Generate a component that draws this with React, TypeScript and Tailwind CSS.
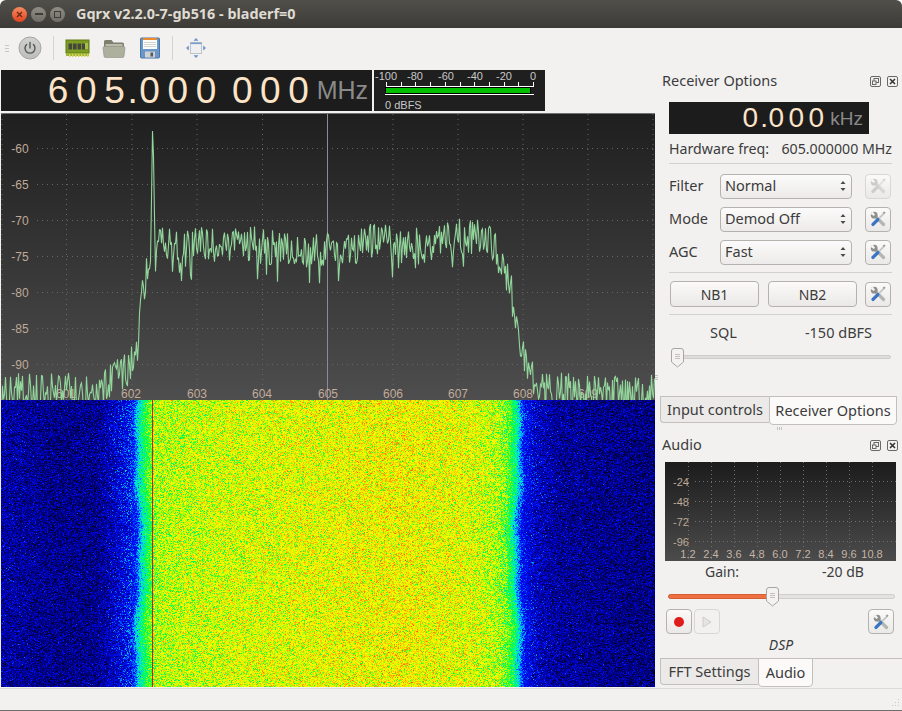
import { useEffect, useRef, type ReactNode } from 'react'

const UI = 'font-["Noto_Sans",sans-serif]'
const ARIAL = 'font-["Liberation_Sans",Arial,sans-serif]'

function rng(seed: number) {
  let a = seed
  return () => {
    a = (a + 0x6d2b79f5) | 0
    let t = Math.imul(a ^ (a >>> 15), 1 | a)
    t = (t + Math.imul(t ^ (t >>> 7), 61 | t)) ^ t
    return ((t ^ (t >>> 14)) >>> 0) / 4294967296
  }
}

function lerpTable(table: number[][], x: number) {
  if (x <= table[0][0]) return table[0][1]
  for (let i = 1; i < table.length; i++) {
    if (x <= table[i][0]) {
      const [x0, y0] = table[i - 1]
      const [x1, y1] = table[i]
      return y0 + ((y1 - y0) * (x - x0)) / (x1 - x0)
    }
  }
  return table[table.length - 1][1]
}

// spectrum envelope, x in plot pixels -> dB
const ENVELOPE = [
  [0, -93.8], [100, -93.5], [118, -91.5], [133, -89.5], [136, -87], [140, -81], [146, -76], [155, -73.5],
  [250, -73.3], [300, -73.8], [330, -74.3], [370, -72.7], [420, -73.5], [440, -73], [465, -72],
  [490, -72.8], [497, -75], [510, -80], [518, -87], [528, -91], [545, -93.5], [654, -93.8],
]

const SPIKE: Record<number, number> = { 149: -75.6, 150: -67, 151: -57.5, 152: -61, 153: -69.3, 154: -77 }

function tracePoints() {
  const rand = rng(605)
  const pts: string[] = []
  for (let x = 0; x < 654; x++) {
    const db = SPIKE[x] ?? lerpTable(ENVELOPE, x) + (rand() - 0.5) * 5.2 + (rand() < 0.08 ? -2.5 : 0)
    pts.push(`${x + 0.5},${(35 + (-60 - db) * 7.2).toFixed(1)}`)
  }
  return pts.join(' ')
}

const COLORMAP = [
  [0, 0, 0, 0], [0.12, 0, 0, 70], [0.24, 0, 0, 190], [0.34, 0, 20, 255], [0.42, 0, 170, 255], [0.48, 0, 240, 200],
  [0.56, 0, 255, 60], [0.66, 200, 255, 0], [0.72, 255, 255, 0], [0.84, 255, 150, 0], [1, 255, 0, 0],
]

function colorAt(v: number) {
  const c = Math.max(0, Math.min(1, v))
  for (let i = 1; i < COLORMAP.length; i++) {
    if (c <= COLORMAP[i][0]) {
      const a = COLORMAP[i - 1]
      const b = COLORMAP[i]
      const t = (c - a[0]) / (b[0] - a[0])
      return [a[1] + (b[1] - a[1]) * t, a[2] + (b[2] - a[2]) * t, a[3] + (b[3] - a[3]) * t]
    }
  }
  return [255, 0, 0]
}

const LEVELS = [
  [0, 0.22], [50, 0.185], [95, 0.19], [115, 0.26], [133, 0.34], [138, 0.46], [146, 0.57], [156, 0.66],
  [230, 0.69], [330, 0.71], [400, 0.725], [470, 0.7], [495, 0.66], [506, 0.6], [513, 0.52], [517, 0.42],
  [522, 0.32], [535, 0.25], [560, 0.2], [654, 0.175],
]

function Waterfall() {
  const ref = useRef<HTMLCanvasElement>(null)
  useEffect(() => {
    const ctx = ref.current?.getContext('2d')
    if (!ctx) return
    const rand = rng(42)
    const img = ctx.createImageData(654, 287)
    for (let y = 0; y < 287; y++) {
      const wobble = Math.sin(y / 31) * 2 + Math.sin(y / 11) * 1.2
      for (let x = 0; x < 654; x++) {
        const g = (rand() + rand() + rand() - 1.5) / 1.5
        const edge = (x > 130 && x < 150) || (x > 505 && x < 530)
        const v = lerpTable(LEVELS, x + (x < 300 ? wobble : -wobble)) + g * (edge ? 0.13 : x > 140 && x < 515 ? 0.21 : 0.2)
        const [r, gr, b] = x === 151 ? [250, 10, 0] : colorAt(v)
        const i = (y * 654 + x) * 4
        img.data[i] = r
        img.data[i + 1] = gr
        img.data[i + 2] = b
        img.data[i + 3] = 255
      }
    }
    ctx.putImageData(img, 0, 0)
  }, [])
  return <canvas ref={ref} width={654} height={287} className="block w-[654px] h-[287px]" />
}

function SpectrumPlot() {
  const xs = [1, 65.5, 131, 196, 261.5, 392, 457, 522, 587, 652]
  const labels: [number, string][] = [[65, '601'], [130, '602'], [196, '603'], [261, '604'], [327, '605'], [392, '606'], [457, '607'], [522, '608'], [587, '609']]
  return (
    <div className="h-[287px] bg-linear-to-b from-[#1f1f1f] to-[#4e4e4e] border-t border-[#707070]">
      <svg width="654" height="286" className={`block ${ARIAL}`}>
        {xs.map(x => (
          <line key={x} x1={x} x2={x} y1={0} y2={286} stroke="#666" strokeDasharray="1 4" />
        ))}
        {[0, 1, 2, 3, 4, 5, 6].map(i => (
          <g key={i}>
            <line x1={36} x2={654} y1={34.5 + i * 36} y2={34.5 + i * 36} stroke="#666" strokeDasharray="1 4" />
            <text x={19} y={39 + i * 36} textAnchor="middle" fontSize="12" fill="#bfa998">-{60 + i * 5}</text>
          </g>
        ))}
        <line x1={326.5} x2={326.5} y1={0} y2={286} stroke="#8b8c96" />
        {labels.map(([x, t]) => (
          <text key={t} x={x} y={284} textAnchor="middle" fontSize="12" fill="#c2ab9b">{t}</text>
        ))}
        <polyline points={tracePoints()} fill="none" stroke="#93d69c" strokeWidth="1.1" />
      </svg>
    </div>
  )
}

function FreqDisplay() {
  const cell = 'w-[28.2px] text-center'
  return (
    <div className={`w-[371px] h-[41px] bg-[#1c1c1c] flex items-center ${ARIAL}`}>
      <div className="ml-[43px] flex text-[37px] leading-none text-[#fde4c8]">
        <span className={cell}>6</span>
        <span className={cell}>0</span>
        <span className={cell}>5</span>
        <span className="w-[8px] -ml-[1px] text-center">.</span>
        <span className={cell}>0</span>
        <span className={cell}>0</span>
        <span className={cell}>0</span>
        <span className="w-[8px]" />
        <span className={cell}>0</span>
        <span className={cell}>0</span>
        <span className={cell}>0</span>
      </div>
      <span className="ml-[4px] text-[25px] leading-none text-[#8a8a8a]">MHz</span>
    </div>
  )
}

function LevelMeter() {
  const ticks = Array.from({ length: 11 }, (_, i) => 12 + i * 14.7)
  const labels: [number, string][] = [[12, '-100'], [41, '-80'], [72, '-60'], [101, '-40'], [130, '-20'], [159, '0']]
  return (
    <div className="w-[171px] h-[41px] bg-[#1f1f1f] ml-[2px]">
      <svg width="171" height="41" className={`block ${ARIAL}`}>
        {labels.map(([x, t]) => (
          <text key={t} x={x} y={10} textAnchor="middle" fontSize="11" fill="#c8c8c8">{t}</text>
        ))}
        {ticks.map(x => (
          <line key={x} x1={Math.round(x) + 0.5} x2={Math.round(x) + 0.5} y1={12} y2={16} stroke="#fff" />
        ))}
        <line x1={12} x2={160} y1={16.5} y2={16.5} stroke="#fff" />
        <rect x={11} y={17} width={146} height={7} fill="#000" />
        <rect x={12} y={18} width={144} height={5} fill="#00c000" />
        <line x1={11} x2={160} y1={24.5} y2={24.5} stroke="#fff" />
        <text x={11} y={39} fontSize="11" fill="#c8c8c8">0 dBFS</text>
      </svg>
    </div>
  )
}

function PowerIcon() {
  return (
    <svg width="24" height="24" viewBox="0 0 24 24">
      <defs>
        <linearGradient id="pw" x1="0" y1="0" x2="0" y2="1">
          <stop offset="0" stopColor="#d0d0ce" />
          <stop offset="1" stopColor="#bdbdbb" />
        </linearGradient>
      </defs>
      <circle cx="12" cy="12" r="11" fill="url(#pw)" stroke="#a6a6a3" />
      <path d="M8.6 8.5a5 5 0 1 0 6.8 0" fill="none" stroke="#55565a" strokeWidth="1.4" strokeLinecap="round" />
      <line x1="12" y1="6.5" x2="12" y2="12" stroke="#55565a" strokeWidth="1.4" strokeLinecap="round" />
    </svg>
  )
}

function ChipIcon() {
  return (
    <svg width="25" height="22" viewBox="0 0 25 22">
      <rect x="1" y="3" width="23" height="13" fill="#7e9c23" stroke="#5f7a12" />
      <rect x="1" y="16" width="23" height="3" fill="#9ab53a" />
      {[3.5, 8, 12.5, 17].map(x => (
        <rect key={x} x={x} y="6.5" width="3.6" height="6" fill="#45463e" />
      ))}
      {[4, 7, 10, 13, 16, 19, 22].map(x => (
        <rect key={x} x={x} y="17" width="1.4" height="3" fill="#d8d25c" />
      ))}
      <rect x="20" y="6" width="3" height="6" fill="#a9be4d" />
    </svg>
  )
}

function FolderIcon() {
  return (
    <svg width="24" height="21" viewBox="0 0 24 21">
      <path d="M2 3.5a1.5 1.5 0 0 1 1.5-1.5h6l2 2.5h9a1.5 1.5 0 0 1 1.5 1.5v4H2z" fill="#7e7f6e" />
      <rect x="3.5" y="6" width="17" height="4" fill="#b9bbab" />
      <path d="M1 10a1.5 1.5 0 0 1 1.5-1.5h19a1.5 1.5 0 0 1 1.5 1.5l-1 8a1.5 1.5 0 0 1-1.5 1.5h-17a1.5 1.5 0 0 1-1.5-1.5z" fill="#adb09c" stroke="#8c8e7c" strokeWidth="0.6" />
    </svg>
  )
}

function FloppyIcon() {
  return (
    <svg width="22" height="22" viewBox="0 0 22 22">
      <path d="M1.5 2a1 1 0 0 1 1-1h17a1 1 0 0 1 1 1v18a1 1 0 0 1-1 1h-17a1 1 0 0 1-1-1z" fill="#6a97c9" stroke="#4a76a8" />
      <rect x="4" y="1" width="14" height="2" fill="#ef8a2c" />
      <rect x="4" y="3" width="14" height="9" fill="#fbfbf7" />
      {[5.5, 7.5, 9.5].map(y => (
        <line key={y} x1="5" x2="17" y1={y} y2={y} stroke="#c9c9c4" strokeWidth="0.8" />
      ))}
      <rect x="6" y="14.5" width="10" height="6" fill="#cfd1d2" />
      <rect x="11.5" y="15.5" width="2.6" height="4" fill="#565a5e" />
    </svg>
  )
}

function MoveIcon() {
  return (
    <svg width="22" height="22" viewBox="0 0 22 22">
      <rect x="5.5" y="5.5" width="11" height="11" fill="#eef0f2" stroke="#c0c4c8" />
      <rect x="5.5" y="5.5" width="11" height="1.6" fill="#7ba0cf" />
      <path d="M11 1l2.500 2.800h-5zM11 21l2.500-2.800h-5zM1 11l2.800-2.500v5zM21 11l-2.800-2.500v5z" fill="#6a94c9" />
    </svg>
  )
}

function ToolGlyph({ faded }: { faded?: boolean }) {
  return (
    <svg width="16" height="16" viewBox="0 0 16 16" className={faded ? 'opacity-40' : ''}>
      <line x1="5" y1="5" x2="13.500" y2="13.500" stroke="#b4b6b4" strokeWidth="3.200" strokeLinecap="round" />
      <circle cx="4.200" cy="4.200" r="3.400" fill="#8e908e" />
      <path d="M0.500 2.800L2.800 0.500L5 3.800L3.800 5z" fill="#f5f4f3" />
      <line x1="13.500" y1="2.800" x2="8" y2="8.300" stroke="#c4c6c4" strokeWidth="1.700" />
      <path d="M12.500 1.800l2-1.300 1 1-1.300 2z" fill="#9a9c9a" />
      <line x1="7.800" y1="8.600" x2="3" y2="13.400" stroke={faded ? '#9b9d9b' : '#3a74c2'} strokeWidth="3.400" strokeLinecap="round" />
    </svg>
  )
}

function ToolButton({ faded }: { faded?: boolean }) {
  return (
    <div className={`w-[26px] h-[25px] rounded-[4px] border flex items-center justify-center bg-linear-to-b from-[#fbfaf9] to-[#ebe9e7] ${faded ? 'border-[#d9d7d4]' : 'border-[#b5b2ad]'}`}>
      <ToolGlyph faded={faded} />
    </div>
  )
}

function Combo({ label, value, faded }: { label: string; value: string; faded?: boolean }) {
  return (
    <div className="flex items-center ml-[14px] w-[222px] h-[24px]">
      <span className="w-[51px] text-[14.5px] text-[#3c3c3c]">{label}</span>
      <div className="w-[132px] h-[25px] rounded-[4px] border border-[#b5b2ad] bg-linear-to-b from-[#fcfbfb] to-[#ecebe9] flex items-center justify-between pl-[4px] pr-[4px]">
        <span className="text-[14.5px] text-[#3c3c3c]">{value}</span>
        <svg width="8" height="14" viewBox="0 0 8 14">
          <path d="M4 2l2.500 3h-5zM4 12l2.500-3h-5z" fill="#4a4a4a" />
        </svg>
      </div>
      <div className="ml-auto">
        <ToolButton faded={faded} />
      </div>
    </div>
  )
}

function Rule() {
  return <div className="ml-[14px] w-[223px] h-px bg-[#d3d1ce]" />
}

function DockTitle({ title }: { title: string }) {
  return (
    <div className="flex items-center h-[22px] pl-[7px] pr-[4px]">
      <span className="text-[14.5px] text-[#3c3c3c]">{title}</span>
      <div className="ml-auto flex gap-[6px]">
        <svg width="11" height="11" viewBox="0 0 11 11">
          <rect x="0.500" y="0.500" width="10" height="10" rx="1.500" fill="none" stroke="#6a6864" />
          <rect x="4" y="2.500" width="4.500" height="4" fill="none" stroke="#6a6864" />
          <rect x="2.500" y="5" width="3.500" height="3.500" fill="#f2f1f0" stroke="#6a6864" />
        </svg>
        <svg width="11" height="11" viewBox="0 0 11 11">
          <rect x="0.500" y="0.500" width="10" height="10" rx="1.500" fill="none" stroke="#6a6864" />
          <path d="M3 3l5 5M8 3l-5 5" stroke="#33312e" strokeWidth="1.500" />
        </svg>
      </div>
    </div>
  )
}

function SliderHandle() {
  return (
    <svg width="13" height="20" viewBox="0 0 13 20" className="absolute top-0">
      <path d="M0.500 3a2.500 2.500 0 0 1 2.500-2.500h7a2.500 2.500 0 0 1 2.500 2.500v11l-6 5-6-5z" fill="#f3f2f1" stroke="#a9a6a1" />
      <path d="M4 6.500h5M4 8.500h5M4 10.500h5" stroke="#b5b2ad" strokeWidth="0.800" />
    </svg>
  )
}

function Tab({ active, width, children }: { active?: boolean; width: string; children: ReactNode }) {
  return (
    <div
      className={`${width} flex items-center justify-center text-[14.5px] text-[#3c3c3c] border border-[#c3c0bc] ${
        active ? 'h-[29px] bg-[#fbfaf9] rounded-b-[4px] -mt-px' : 'h-[27px] bg-[#eceae8] rounded-bl-[4px] border-r-0 -mt-px'
      }`}
    >
      {children}
    </div>
  )
}

function AudioPlot() {
  const xs = [23, 46, 69, 92, 115, 138, 161, 184, 207]
  const labels = ['1.2', '2.4', '3.6', '4.8', '6.0', '7.2', '8.4', '9.6', '10.8']
  return (
    <div className="ml-[10px] w-[231px] h-[99px] bg-linear-to-b from-[#1c1c1c] to-[#4c4c4c]">
      <svg width="231" height="99" className={`block ${ARIAL}`}>
        {xs.map(x => (
          <line key={x} x1={x + 0.5} x2={x + 0.5} y1={0} y2={99} stroke="#6f6f6f" strokeDasharray="1 3" />
        ))}
        {['-24', '-48', '-72', '-96'].map((t, i) => (
          <g key={t}>
            <line x1={30} x2={231} y1={19.5 + i * 20} y2={19.5 + i * 20} stroke="#6f6f6f" strokeDasharray="1 3" />
            <text x={16} y={23.5 + i * 20} textAnchor="middle" fontSize="11" fill="#bfa998">{t}</text>
          </g>
        ))}
        {labels.map((t, i) => (
          <text key={t} x={23 + i * 23} y={96} textAnchor="middle" fontSize="11" fill="#c6b4a6">{t}</text>
        ))}
      </svg>
    </div>
  )
}

function ReceiverDock() {
  const cell = 'w-[20px] text-center'
  return (
    <div>
      <DockTitle title="Receiver Options" />
      <div className={`mt-[10px] ml-[14px] w-[200px] h-[32px] bg-[#1c1c1c] flex items-center justify-end pr-[6px] ${ARIAL}`}>
        <div className="flex text-[28px] leading-none text-[#fde4c8]">
          <span className={cell}>0</span>
          <span className="w-[6px] text-center">.</span>
          <span className={cell}>0</span>
          <span className={cell}>0</span>
          <span className={cell}>0</span>
        </div>
        <span className="ml-[4px] text-[19px] leading-none text-[#8a8a8a]">kHz</span>
      </div>
      <div className="mt-[5px] ml-[14px] w-[223px] h-[20px] flex items-center justify-between text-[14.2px] text-[#3c3c3c]">
        <span>Hardware freq:</span>
        <span>605.000000 MHz</span>
      </div>
      <div className="mt-[4px]"><Rule /></div>
      <div className="mt-[10px]"><Combo label="Filter" value="Normal" faded /></div>
      <div className="mt-[9px]"><Combo label="Mode" value="Demod Off" /></div>
      <div className="mt-[9px]"><Combo label="AGC" value="Fast" /></div>
      <div className="mt-[8px]"><Rule /></div>
      <div className="mt-[8px] ml-[15px] w-[221px] flex items-center">
        <div className="w-[89px] h-[26px] rounded-[4px] border border-[#b5b2ad] bg-linear-to-b from-[#fbfaf9] to-[#ebe9e7] text-[14px] text-[#3c3c3c] flex items-center justify-center">NB1</div>
        <div className="ml-[9px] w-[89px] h-[26px] rounded-[4px] border border-[#b5b2ad] bg-linear-to-b from-[#fbfaf9] to-[#ebe9e7] text-[14px] text-[#3c3c3c] flex items-center justify-center">NB2</div>
        <div className="ml-auto"><ToolButton /></div>
      </div>
      <div className="mt-[7px]"><Rule /></div>
      <div className="mt-[7px] h-[18px] relative flex text-[14.5px] text-[#3c3c3c]">
        <span className="ml-[55px]">SQL</span>
        <span className="ml-[68px]">-150 dBFS</span>
      </div>
      <div className="mt-[8px] ml-[16px] w-[220px] h-[19px] relative">
        <div className="absolute left-0 right-0 top-[7px] h-[4px] rounded-full bg-[#dedcd9] border border-[#cfcdca]" />
        <SliderHandle />
      </div>
    </div>
  )
}

function AudioDock() {
  return (
    <div>
      <DockTitle title="Audio" />
      <div className="mt-[6px]"><AudioPlot /></div>
      <div className="h-[18px] flex text-[14px] text-[#3c3c3c]">
        <span className="ml-[50px]">Gain:</span>
        <span className="ml-[83px]">-20 dB</span>
      </div>
      <div className="mt-[8px] ml-[13px] w-[227px] h-[19px] relative">
        <div className="absolute left-0 right-0 top-[7px] h-[5px] rounded-full bg-[#e4e2df] border border-[#d0cecb]" />
        <div className="absolute left-0 w-[104px] top-[7px] h-[5px] rounded-l-full bg-[#ee6f3f] border border-[#d45f34]" />
        <div className="absolute left-[98px] top-0 w-[13px] h-[20px]">
          <SliderHandle />
        </div>
      </div>
      <div className="mt-[3px] ml-[11px] w-[228px] flex items-center">
        <div className="w-[26px] h-[25px] rounded-[4px] border border-[#b5b2ad] bg-linear-to-b from-[#fbfaf9] to-[#ebe9e7] flex items-center justify-center">
          <div className="w-[10px] h-[10px] rounded-full bg-[#e01b1b]" />
        </div>
        <div className="ml-[2px] w-[26px] h-[25px] rounded-[4px] border border-[#d9d7d4] flex items-center justify-center">
          <svg width="10" height="12" viewBox="0 0 10 12">
            <path d="M1 1l8 5-8 5z" fill="#e6e5e2" stroke="#cfcdca" />
          </svg>
        </div>
        <div className="ml-auto"><ToolButton /></div>
      </div>
      <div className="mt-[1px] h-[18px] flex items-center justify-center text-[14px] italic text-[#3c3c3c] pl-[5px]">DSP</div>
    </div>
  )
}

export default function App() {
  return (
    <div className={`relative w-[902px] h-[711px] flex flex-col bg-white overflow-hidden ${UI}`}>
      <header className="h-[28px] shrink-0 rounded-t-[6px] bg-linear-to-b from-[#504f4a] to-[#3c3b37] flex items-center">
        <div className="ml-[12px] flex gap-[4px]">
          <div className="w-[15px] h-[15px] rounded-full bg-linear-to-b from-[#f58a60] to-[#e0401c] flex items-center justify-center">
            <svg width="7" height="7" viewBox="0 0 7 7"><path d="M1 1l5 5M6 1l-5 5" stroke="#6b2410" strokeWidth="1.300" /></svg>
          </div>
          <div className="w-[15px] h-[15px] rounded-full bg-linear-to-b from-[#8f8d86] to-[#6f6d66] flex items-center justify-center">
            <div className="w-[8px] h-[1.500px] bg-[#3d3c38]" />
          </div>
          <div className="w-[15px] h-[15px] rounded-full bg-linear-to-b from-[#8f8d86] to-[#6f6d66] flex items-center justify-center">
            <div className="w-[7px] h-[7px] border border-[#3d3c38]" />
          </div>
        </div>
        <span className="ml-[11px] text-[14.4px] font-bold text-[#dfdbd2]">Gqrx v2.2.0-7-gb516 - bladerf=0</span>
      </header>

      <div className="h-[42px] shrink-0 bg-[#f2f1f0] flex items-center pb-[2px]">
        <div className="ml-[5px] w-[4px] flex flex-col gap-[2px]">
          <div className="h-px bg-[#c8c6c3]" />
          <div className="h-px bg-[#c8c6c3]" />
          <div className="h-px bg-[#c8c6c3]" />
        </div>
        <div className="ml-[9px]"><PowerIcon /></div>
        <div className="ml-[11px] w-px h-[24px] bg-[#d5d3d0]" />
        <div className="ml-[11px]"><ChipIcon /></div>
        <div className="ml-[12px]"><FolderIcon /></div>
        <div className="ml-[13px]"><FloppyIcon /></div>
        <div className="ml-[11px] w-px h-[24px] bg-[#d5d3d0]" />
        <div className="ml-[12px]"><MoveIcon /></div>
      </div>

      <div className="flex-1 flex bg-[#f2f1f0] min-h-0">
        <div className="w-[655px] shrink-0 pl-px">
          <div className="flex h-[41px]">
            <FreqDisplay />
            <LevelMeter />
          </div>
          <div className="mt-[2px]"><SpectrumPlot /></div>
          <Waterfall />
        </div>
        <div className="flex-1 relative">
          <ReceiverDock />
          <div className="mt-[29px] ml-[5px] w-[237px] border-t border-[#c3c0bc] flex items-start">
            <Tab width="w-[109px]">Input controls</Tab>
            <Tab active width="w-[128px]">Receiver Options</Tab>
          </div>
          <div className="mt-[9px]"><AudioDock /></div>
          <div className="mt-[5px] ml-[5px] w-[242px] border-t border-[#c3c0bc] flex items-start">
            <Tab width="w-[98px]">FFT Settings</Tab>
            <Tab active width="w-[55px]">Audio</Tab>
          </div>
        </div>
      </div>

      <div className="h-[23px] shrink-0 bg-[#f2f1f0] border-t border-[#dcdad7] border-b border-b-[#6e6e6e]" />

      {/* splitter and size grips */}
      <div className="absolute left-[655px] top-[375px] w-[3px] flex flex-col gap-[1px]">
        <div className="h-px bg-[#c4c2bf]" />
        <div className="h-px bg-[#c4c2bf]" />
        <div className="h-px bg-[#c4c2bf]" />
      </div>
      <div className="absolute left-[777px] top-[427px] h-[3px] flex gap-[1px]">
        <div className="w-px bg-[#c4c2bf]" />
        <div className="w-px bg-[#c4c2bf]" />
        <div className="w-px bg-[#c4c2bf]" />
      </div>
      <svg width="10" height="10" viewBox="0 0 10 10" className="absolute left-[890px] top-[698px]">
        <path d="M8 1h1v1h-1zM5 4h1v1h-1zM8 4h1v1h-1zM2 7h1v1h-1zM5 7h1v1h-1zM8 7h1v1h-1z" fill="#c9c7c4" />
      </svg>
    </div>
  )
}
